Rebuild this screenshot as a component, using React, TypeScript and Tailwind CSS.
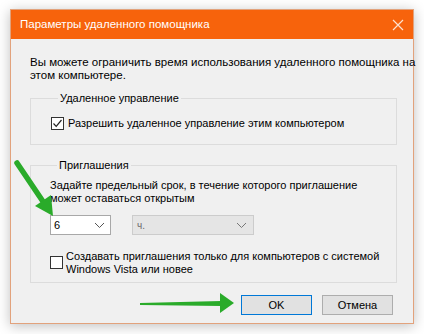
import { useState } from "react";

function CheckBox({ checked }: { checked: boolean }) {
  return (
    <span className="flex h-[13px] w-[13px] shrink-0 items-center justify-center border border-[#333333] bg-white">
      {checked && (
        <svg width="11" height="11" viewBox="0 0 11 11">
          <path d="M1.5 5.5 L4.2 8.3 L9.5 2" fill="none" stroke="#222" strokeWidth="1.2" />
        </svg>
      )}
    </span>
  );
}

function Chevron({ color }: { color: string }) {
  return (
    <svg width="11" height="7" viewBox="0 0 11 7">
      <path d="M1 1 L5.5 5.5 L10 1" fill="none" stroke={color} strokeWidth="1" />
    </svg>
  );
}

export default function App() {
  const [allow, setAllow] = useState(true);
  const [vista, setVista] = useState(false);

  return (
    <div
      className="relative h-[334px] w-[424px] overflow-hidden whitespace-nowrap bg-white pl-[10px] pt-[9px] text-[11px] text-black"
      style={{ fontFamily: '"Liberation Sans", Arial, sans-serif' }}
    >
      {/* Window */}
      <div className="flex h-[315px] w-[404px] flex-col border border-[#e2a27c] bg-[#f0f0f0] shadow-[0_2px_12px_rgba(0,0,0,0.25)]">
        {/* Title bar */}
        <div className="flex h-[29px] shrink-0 items-center justify-between bg-[#f7630c] pl-[9px] pr-[8px] text-white">
          <span className="text-[11.5px]">Параметры удаленного помощника</span>
          <svg width="12" height="12" viewBox="0 0 12 12" className="mr-[1px]">
            <path d="M1 1 L11 11 M11 1 L1 11" stroke="#fde2cf" strokeWidth="1.2" />
          </svg>
        </div>

        {/* Body */}
        <div className="flex flex-1 flex-col pl-[19px] pr-[16px] pt-[17px]">
          <p className="text-[11.5px] leading-[13px]">
            Вы можете ограничить время использования удаленного помощника на
            <br />
            этом компьютере.
          </p>

          <fieldset className="mt-[10px] border border-[#dcdcdc] pb-[14px] pl-[20px]">
            <legend className="ml-[7px] px-[2px] leading-[13px]">Удаленное управление</legend>
            <label className="mt-[12px] flex items-center gap-[4px]" onClick={() => setAllow(!allow)}>
              <CheckBox checked={allow} />
              <span className="leading-[13px]">Разрешить удаленное управление этим компьютером</span>
            </label>
          </fieldset>

          <fieldset className="mt-[14px] border border-[#dcdcdc] pb-[6px] pl-[19px]">
            <legend className="ml-[7px] px-[2px] leading-[13px]">Приглашения</legend>
            <p className="mt-[7px] leading-[13px]">
              Задайте предельный срок, в течение которого приглашение
              <br />
              может оставаться открытым
            </p>
            <div className="mt-[10px] flex items-center gap-[21px]">
              <div className="flex h-[20px] w-[61px] items-center justify-between border border-[#a8a8a8] bg-white pl-[3px] pr-[5px]">
                <span>6</span>
                <Chevron color="#555" />
              </div>
              <div className="flex h-[20px] w-[122px] items-center justify-between border border-[#cccccc] bg-[#e5e5e5] pl-[4px] pr-[6px] text-[#6d6d6d]">
                <span className="text-[10px]">ч.</span>
                <Chevron color="#777" />
              </div>
            </div>
            <label className="mt-[15px] flex items-start gap-[3px]" onClick={() => setVista(!vista)}>
              <span className="mt-[6px]">
                <CheckBox checked={vista} />
              </span>
              <span className="leading-[13px]">
                Создавать приглашения только для компьютеров с системой
                <br />
                Windows Vista или новее
              </span>
            </label>
          </fieldset>

          <div className="mt-[12px] flex justify-end gap-[10px] pr-[4px]">
            <button className="h-[20px] w-[71px] border border-[#0078d7] bg-[#e1e1e1]">OK</button>
            <button className="h-[20px] w-[71px] border border-[#adadad] bg-[#e1e1e1]">Отмена</button>
          </div>
        </div>
      </div>

      {/* Green annotation arrows */}
      <svg className="pointer-events-none absolute left-0 top-0" width="424" height="334" viewBox="0 0 424 334">
        <path d="M17 163 L44 203" stroke="#2aab2a" strokeWidth="5.5" strokeLinecap="round" />
        <polygon points="53,216 35,206 51,195" fill="#2aab2a" />
        <polygon points="140,303 221,301 221,306 140,305" fill="#2aab2a" />
        <polygon points="234,303 220,293 220,313" fill="#2aab2a" />
      </svg>
    </div>
  );
}
